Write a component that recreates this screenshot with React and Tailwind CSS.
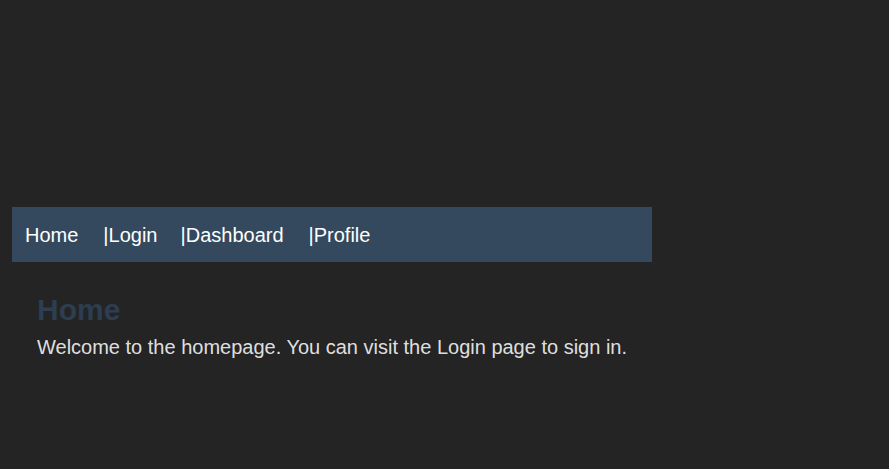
import React from "react";

const App = () => {
    return (
        <div className="min-h-screen bg-[#242424] pt-[207px] px-[12px] font-['Liberation_Sans',Arial,sans-serif]">
            <nav className="w-[640px] h-[55px] bg-[#34495e] flex items-center pl-[13px] pt-[2px]">
                <a href="#" className="text-white text-[20px] leading-[23px] mr-[25px]">Home</a>
                <a href="#" className="text-white text-[20px] leading-[23px] mr-[23px]">|Login</a>
                <a href="#" className="text-white text-[20px] leading-[23px] mr-[25px]">|Dashboard</a>
                <a href="#" className="text-white text-[20px] leading-[23px]">|Profile</a>
            </nav>
            <div className="pl-[25px] pt-[30px]">
                <h1 className="text-[30px] leading-[36px] font-bold text-[#2c3e50]">Home</h1>
                <p className="mt-[8px] text-[20px] leading-[23px] text-[rgba(255,255,255,0.87)]">
                    Welcome to the homepage. You can visit the Login page to sign in.
                </p>
            </div>
        </div>
    );
};

export default App;
